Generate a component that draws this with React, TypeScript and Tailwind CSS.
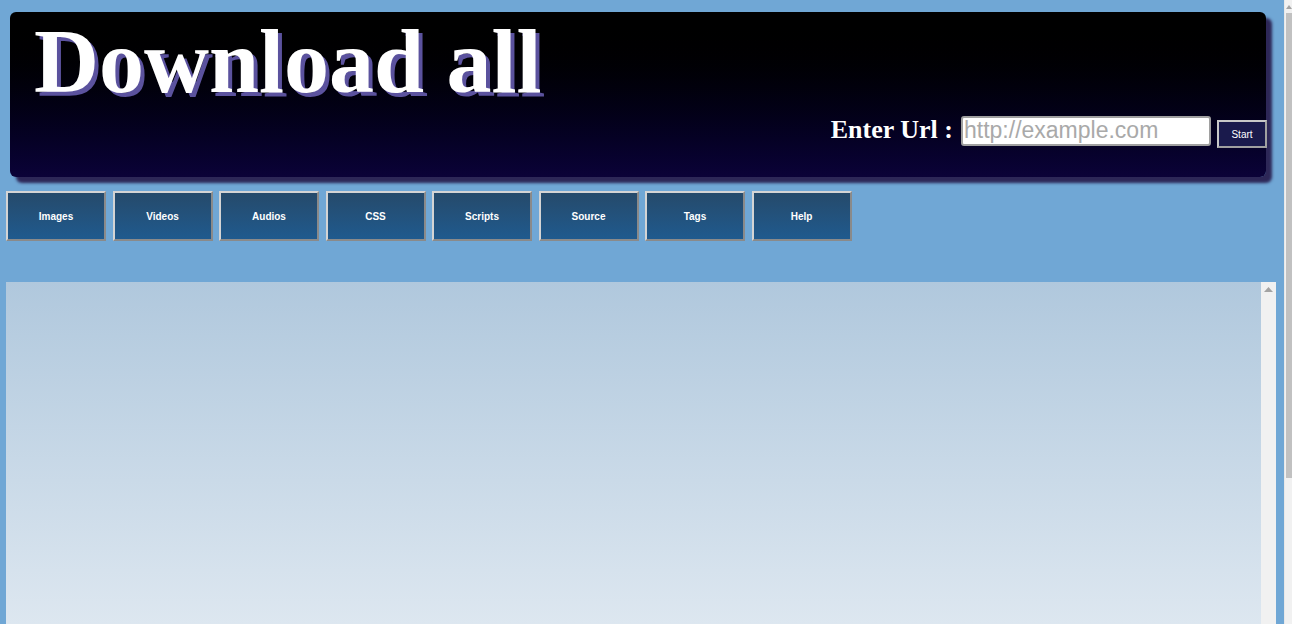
import React from "react";

const tabs = ["Images", "Videos", "Audios", "CSS", "Scripts", "Source", "Tags", "Help"];

export default function App() {
  return (
    <div className="flex h-[624px] w-[1292px] overflow-hidden bg-[#70a7d5]">
      <div className="flex w-[1284px] flex-col">
        <header className="ml-[10px] mt-[12px] flex h-[165px] w-[1256px] flex-col rounded-[6px] bg-gradient-to-b from-[#000000] to-[#0b0238] pl-[24px] pt-[5px] shadow-[6px_6px_3px_#2d2757]">
          <h1 className="text-[90px] font-bold leading-[90px] text-white [font-family:'Liberation_Serif',serif] [text-shadow:4px_4px_0_#5b529e]">
            Download all
          </h1>
          <div className="mr-[-1px] mt-[6px] flex items-center justify-end">
            <span className="mr-[8px] mt-[-1px] text-[26px] font-bold leading-none text-white [font-family:'Liberation_Serif',serif]">
              Enter Url :
            </span>
            <input
              className="h-[30px] w-[250px] rounded-[3px] border-2 border-[#a0a0a0] bg-white px-[1px] text-[23px] leading-[26px] text-gray-700 outline-none placeholder:text-[#a9a9a9] [font-family:'Liberation_Sans',Arial,sans-serif]"
              placeholder="http://example.com"
            />
            <button className="ml-[6px] mt-[7px] h-[28px] w-[50px] border-2 border-t-[#c8c8c8] border-l-[#c8c8c8] border-r-[#a0a0a0] border-b-[#a0a0a0] bg-[#1a1a4c] text-[10px] text-white [font-family:'Liberation_Sans',Arial,sans-serif]">
              Start
            </button>
          </div>
        </header>
        <nav className="ml-[6px] mt-[14px] flex gap-[6.5px]">
          {tabs.map((t) => (
            <div
              key={t}
              className="flex h-[50px] w-[100px] items-center justify-center border-2 border-t-[#d4d4d4] border-l-[#d4d4d4] border-r-[#8a8a8a] border-b-[#8a8a8a] bg-gradient-to-b from-[#254a6b] to-[#1f5a8e] text-[10px] font-bold text-white [font-family:'Liberation_Sans',Arial,sans-serif]"
            >
              {t}
            </div>
          ))}
        </nav>
        <main className="ml-[6px] mt-[41px] flex w-[1270px] flex-1 bg-gradient-to-b from-[#b0c8dd] to-[#dde7f0]">
          <div className="flex-1" />
          <div className="flex w-[15px] flex-col items-center bg-[#f1f1f1] pt-[5px]">
            <svg width="9" height="5" viewBox="0 0 9 5">
              <path d="M4.5 0 L9 5 L0 5 Z" fill="#a3a3a3" />
            </svg>
          </div>
        </main>
      </div>
      <div className="flex w-[8px] flex-col border-l border-[#e8e8e8] bg-[#f1f1f1]">
        <div className="flex h-[13px] items-center justify-center">
          <svg width="6" height="4" viewBox="0 0 6 4">
            <path d="M3 0 L6 4 L0 4 Z" fill="#a3a3a3" />
          </svg>
        </div>
        <div className="ml-[1px] h-[465px] bg-[#c1c1c1]" />
      </div>
    </div>
  );
}
